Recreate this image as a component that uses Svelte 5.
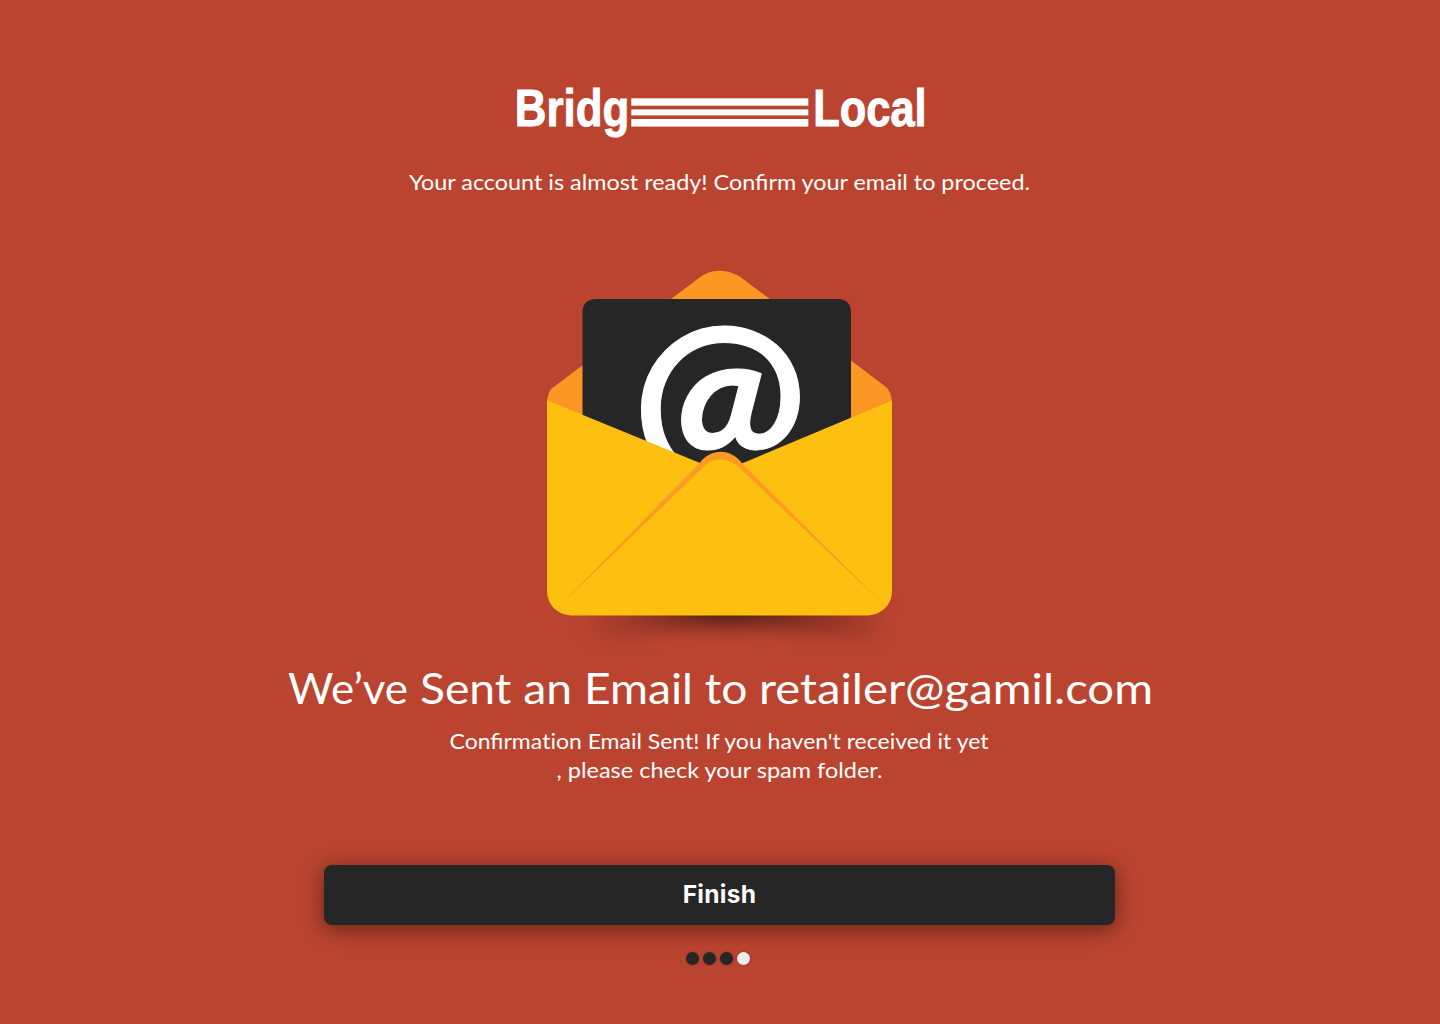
<script>
  const steps = [1, 2, 3, 4];
  let current = $state(4);
</script>

<main>
  <svg class="logo" width="412" height="52" viewBox="514 86 412 52">
    <text class="brand" x="514.8" y="126.4" textLength="114.500" lengthAdjust="spacingAndGlyphs">Bridg</text>
    <rect x="631.3" y="98.3" width="177" height="7.4" />
    <rect x="631.3" y="109.4" width="177" height="6" />
    <rect x="631.3" y="119" width="177" height="7.6" />
    <text class="brand" x="813.2" y="126.4" textLength="113.500" lengthAdjust="spacingAndGlyphs">Local</text>
  </svg>

  <svg class="line intro" width="640" height="30">
    <text x="9" y="21" textLength="621" lengthAdjust="spacingAndGlyphs">Your account is almost ready! Confirm your email to proceed.</text>
  </svg>

  <svg class="envelope" width="360" height="400" viewBox="540 265 360 400">
    <defs>
      <linearGradient id="shade" x1="580" x2="895" y1="0" y2="0" gradientUnits="userSpaceOnUse">
        <stop offset="0" stop-color="#1c0b08" stop-opacity="0" />
        <stop offset=".2" stop-color="#1c0b08" stop-opacity=".24" />
        <stop offset=".46" stop-color="#1c0b08" stop-opacity=".68" />
        <stop offset=".75" stop-color="#1c0b08" stop-opacity=".32" />
        <stop offset="1" stop-color="#1c0b08" stop-opacity="0" />
      </linearGradient>
      <filter id="soft" x="-10%" y="-60%" width="120%" height="220%" color-interpolation-filters="sRGB"><feGaussianBlur stdDeviation="9" /></filter>
      <clipPath id="card"><path d="M583 299H851V417.500L743 464 H700L583 415Z" /></clipPath>
    </defs>
    <path d="M580 590H886L876 642Q720 610 590 642Z" fill="url(#shade)" filter="url(#soft)" />
    <path d="M547 403C547.500 395 549.500 390 553 387.500L699 278Q708 270.700 719.500 270.700T741 277.500L886 387Q891.500 392 892 403V440H547Z" fill="#fc9723" />
    <path d="M547 402.500H892V440H547Z" fill="#fb9524" />
    <path d="M582.500 470V313Q582.500 299 596.500 299H837Q851 299 851 313V470Z" fill="#262626" />
    <g clip-path="url(#card)">
      <text class="at" transform="translate(632 469) scale(1.015 1.007)" x="0" y="0">@</text>
    </g>
    <path d="M547 400.300L700 463H743L892 400.500V591.400A24 24 0 0 1 868 615.400H571A24 24 0 0 1 547 591.400Z" fill="#fdc010" />
    <path d="M557 608.500L700 462.500C711 448 731 448 742 463.300L885.500 606.500Z" fill="#fc9a22" />
    <path d="M557 608.500L703 467.500C713 456.800 729 456.800 739 467.500L885.500 606.500L870 612H570Z" fill="#fdc010" />
  </svg>

  <svg class="line sent" width="880" height="56">
    <text x="8" y="38.500"><tspan textLength="120" lengthAdjust="spacingAndGlyphs">We’ve</tspan> <tspan x="140" textLength="327.500" lengthAdjust="spacingAndGlyphs">Sent an Email to</tspan> <tspan x="479" textLength="394" lengthAdjust="spacingAndGlyphs">retailer@gamil.com</tspan></text>
  </svg>

  <svg class="line note" width="560" height="60">
    <text x="9.500" y="21" textLength="539" lengthAdjust="spacingAndGlyphs">Confirma<tspan class="plain">ti</tspan>on Email Sent! If you haven't received it yet</text>
    <text x="116.500" y="50" textLength="326" lengthAdjust="spacingAndGlyphs">, please check your spam folder.</text>
  </svg>

  <button>Finish</button>

  <nav aria-label="Progress">
    {#each steps as step}
      <span class:active={step === current}></span>
    {/each}
  </nav>
</main>

<style>
  :global(body) { background: #bb4430; }
  main {
    height: 1024px;
    box-sizing: border-box;
    padding: 86px 0 0;
    display: flex;
    flex-direction: column;
    align-items: center;
    background: #bb4430;
    color: #fff;
    font-family: Lato, sans-serif;
    overflow: hidden;
  }
  svg { display: block; flex: none; fill: #fff; overflow: visible; }
  .brand { font: 700 52.500px "Liberation Sans", sans-serif; stroke: #fff; stroke-width: 1px; }
  .line { font-size: 22px; }
  .plain { font-variant-ligatures: none; }
  .intro { margin-top: 31px; }
  .envelope { margin-top: 66px; }
  .at { font: 700 205px Lato, sans-serif; stroke: #fff; stroke-width: 1px; }
  .sent { font-size: 43px; }
  .note { margin-top: 7px; }
  button {
    flex: none;
    width: 791px;
    height: 60px;
    margin: 77px 1px 0 0;
    padding: 0 0 1px;
    border: 0;
    border-radius: 8px;
    background: #262626;
    color: #fff;
    font: 700 24.500px/59px Inter, sans-serif;
    letter-spacing: .3px;
    box-shadow: 0 4px 22px rgba(0, 0, 0, .48);
  }
  nav { display: flex; gap: 4px; margin: 27px 4px 0 0; }
  nav span {
    width: 13px;
    height: 13px;
    border-radius: 50%;
    background: #262626;
    box-shadow: 0 0 3px rgba(0, 0, 0, .3);
  }
  nav .active { background: #ececec; }
</style>
